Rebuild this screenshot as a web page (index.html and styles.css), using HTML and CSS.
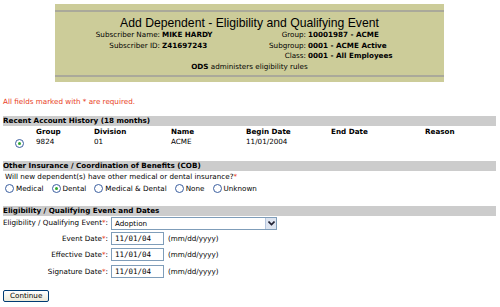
FILE: index.html
```html
<!DOCTYPE html>
<html>
<head>
<meta charset="utf-8">
<link rel="stylesheet" href="styles.css">
</head>
<body>
<div class="hdr">
  <div class="hdr-inner">
    <div class="title">Add Dependent - Eligibility and Qualifying Event</div>
    <div class="info">
      <span class="lbl">Subscriber Name:</span><b>MIKE HARDY</b>
      <span class="lbl">Group:</span><b>10001987 - ACME</b>
      <span class="lbl">Subscriber ID:</span><b>Z41697243</b>
      <span class="lbl">Subgroup:</span><b>0001 - ACME Active</b>
      <span></span><span></span>
      <span class="lbl">Class:</span><b>0001 - All Employees</b>
    </div>
    <div class="ods"><b>ODS</b> administers eligibility rules</div>
  </div>
</div>

<div class="req">All fields marked with * are required.</div>

<div class="bar bar1">Recent Account History (18 months)</div>
<div class="hist">
  <span></span><b>Group</b><b>Division</b><b>Name</b><b>Begin Date</b><b>End Date</b><b>Reason</b>
  <span class="radio on"></span><span>9824</span><span>01</span><span>ACME</span><span>11/01/2004</span><span></span><span></span>
</div>

<div class="bar bar2">Other Insurance / Coordination of Benefits (COB)</div>
<div class="q">Will new dependent(s) have other medical or dental insurance?<span class="star">*</span></div>
<div class="opts">
  <span class="opt"><span class="radio"></span>Medical</span>
  <span class="opt"><span class="radio on"></span>Dental</span>
  <span class="opt"><span class="radio"></span>Medical &amp; Dental</span>
  <span class="opt"><span class="radio"></span>None</span>
  <span class="opt"><span class="radio"></span>Unknown</span>
</div>

<div class="bar bar3">Eligibility / Qualifying Event and Dates</div>
<div class="form">
  <span class="flbl">Eligibility / Qualifying Event<span class="star">*</span>:</span>
  <span class="select"><span class="sel-text">Adoption</span><span class="sel-btn"><svg width="7" height="5" viewBox="0 0 7 5"><path d="M0.5 0.5 L3.5 3.5 L6.5 0.5" fill="none" stroke="#223" stroke-width="1.6"/></svg></span></span>
  <span class="flbl">Event Date<span class="star">*</span>:</span>
  <span class="row"><span class="inp">11/01/04</span><span class="fmt">(mm/dd/yyyy)</span></span>
  <span class="flbl">Effective Date<span class="star">*</span>:</span>
  <span class="row"><span class="inp">11/01/04</span><span class="fmt">(mm/dd/yyyy)</span></span>
  <span class="flbl">Signature Date<span class="star">*</span>:</span>
  <span class="row"><span class="inp">11/01/04</span><span class="fmt">(mm/dd/yyyy)</span></span>
</div>

<div class="btn-row"><span class="btn">Continue</span></div>
</body>
</html>
```

FILE: styles.css
```css
html, body { margin: 0; padding: 0; background: #fff; }
body {
  font-family: "DejaVu Sans", Verdana, sans-serif;
  font-size: 7.2px;
  color: #000;
  padding: 4px 4px 0 3px;
}
b { font-weight: bold; }
.hdr {
  width: 389px;
  margin: 0 0 0 52px;
  background: #cccc99;
  padding: 6px 0 5px;
}
.hdr-inner {
  border-top: 2px solid #aaa99a;
  border-bottom: 2px solid #aaa99a;
  padding: 4px 0 3px;
}
.title {
  font-family: "Liberation Sans", Arial, sans-serif;
  font-size: 12.2px;
  text-align: center;
  line-height: 14px;
}
.info {
  display: grid;
  grid-template-columns: 105px 88px 54px auto;
  column-gap: 2px;
  line-height: 10.5px;
}
.lbl { text-align: right; }
.ods { text-align: center; line-height: 10px; }
.req { color: #e8401c; margin: 15px 0 0; line-height: 10px; }
.bar {
  background: #cccccc;
  font-weight: bold;
  line-height: 10px;
  height: 10px;
}
.bar1 { margin-top: 9px; }
.hist {
  display: grid;
  grid-template-columns: 33px 58px 77px 75px 85px 94px auto;
  line-height: 10px;
  margin-top: 1px;
}
.hist .radio { margin: 2px 0 0 12px; }
.radio {
  display: inline-block;
  width: 9px; height: 9px;
  border: 1px solid #3b5fa0;
  border-radius: 50%;
  box-sizing: border-box;
  background: #fff;
  position: relative;
  vertical-align: -2px;
}
.radio.on::after {
  content: "";
  position: absolute;
  left: 2px; top: 2px;
  width: 3px; height: 3px;
  border-radius: 50%;
  background: #2fa82f;
}
.bar2 { margin-top: 13px; }
.q { line-height: 11px; margin-left: 2px; }
.star { color: #e8401c; }
.opts { display: flex; gap: 8px; margin-left: 2px; margin-top: 1px; line-height: 12px; }
.opt .radio { margin-right: 2px; }
.bar3 { margin-top: 11px; }
.form {
  display: grid;
  grid-template-columns: 105px auto;
  column-gap: 3px;
  row-gap: 3.5px;
  margin-top: 1px;
  align-items: center;
}
.flbl { text-align: right; white-space: nowrap; }
.form .select { margin-bottom: -1.5px; }
.select {
  display: flex;
  width: 166px;
  height: 13px;
  border: 1px solid #7f9db9;
  box-sizing: border-box;
}
.sel-text { flex: 1; padding-left: 3px; line-height: 11px; }
.sel-btn {
  width: 10px;
  background: #dde4f0;
  border-left: 1px solid #b6c6de;
  display: flex; align-items: center; justify-content: center;
}
.row { display: flex; align-items: center; gap: 4px; }
.inp {
  width: 53px; height: 13px;
  border: 1px solid #7f9db9;
  box-sizing: border-box;
  padding-left: 3px;
  line-height: 11px;
  font-family: "DejaVu Sans Mono", monospace;
  font-size: 7.5px;
}
.btn-row { margin-top: 12px; }
.btn {
  display: inline-block;
  border: 1px solid #003c74;
  border-radius: 2px;
  background: linear-gradient(#ffffff, #ece9d8);
  padding: 0 6px;
  line-height: 10px;
}
```
